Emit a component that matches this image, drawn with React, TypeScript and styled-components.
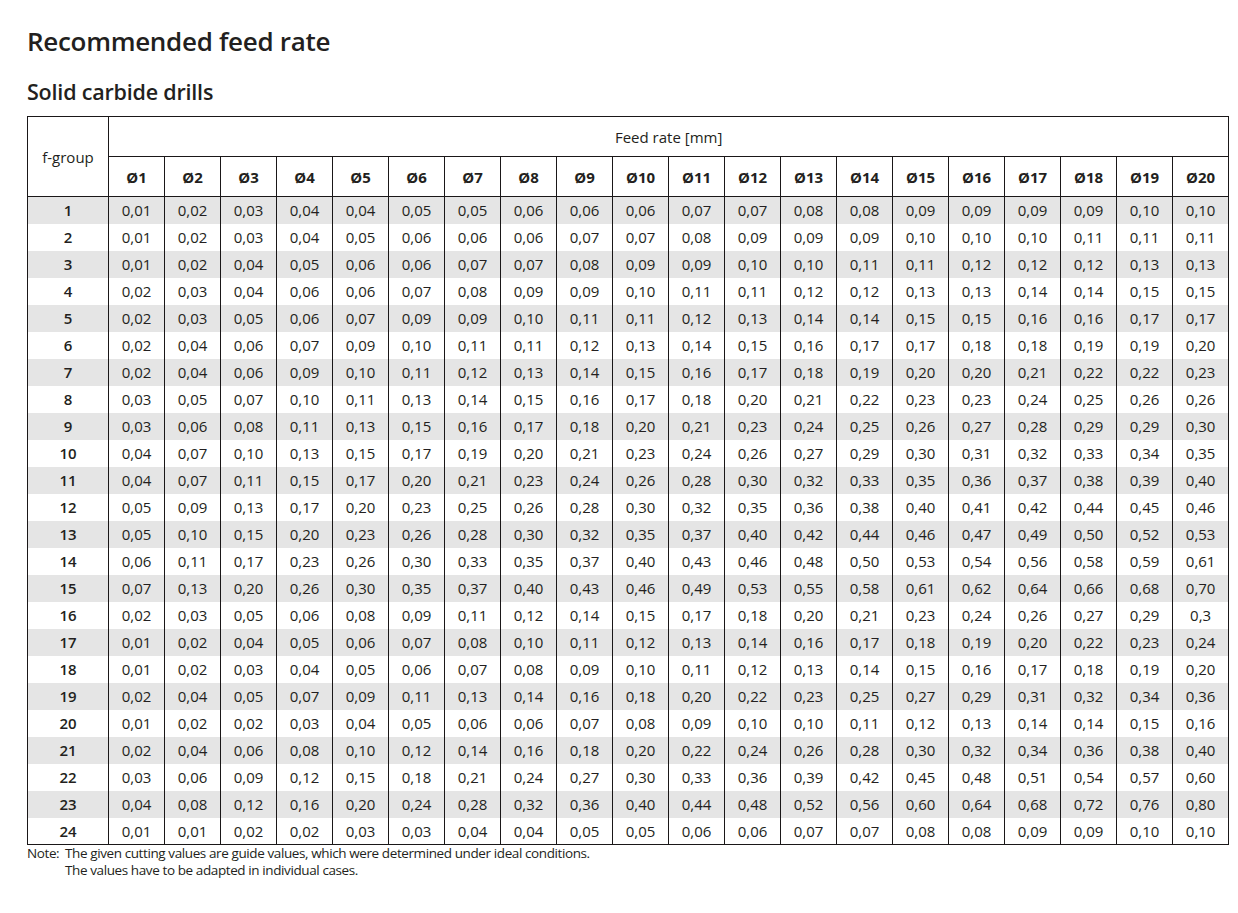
import React from "react";
import styled, { createGlobalStyle } from "styled-components";

const GlobalStyle = createGlobalStyle`
	body {
		margin: 0;
		background: #fff;
		color: #231f20;
		font-family: "Open Sans", "Liberation Sans", sans-serif;
	}
`;

const ROWS = [
	"0,01 0,02 0,03 0,04 0,04 0,05 0,05 0,06 0,06 0,06 0,07 0,07 0,08 0,08 0,09 0,09 0,09 0,09 0,10 0,10",
	"0,01 0,02 0,03 0,04 0,05 0,06 0,06 0,06 0,07 0,07 0,08 0,09 0,09 0,09 0,10 0,10 0,10 0,11 0,11 0,11",
	"0,01 0,02 0,04 0,05 0,06 0,06 0,07 0,07 0,08 0,09 0,09 0,10 0,10 0,11 0,11 0,12 0,12 0,12 0,13 0,13",
	"0,02 0,03 0,04 0,06 0,06 0,07 0,08 0,09 0,09 0,10 0,11 0,11 0,12 0,12 0,13 0,13 0,14 0,14 0,15 0,15",
	"0,02 0,03 0,05 0,06 0,07 0,09 0,09 0,10 0,11 0,11 0,12 0,13 0,14 0,14 0,15 0,15 0,16 0,16 0,17 0,17",
	"0,02 0,04 0,06 0,07 0,09 0,10 0,11 0,11 0,12 0,13 0,14 0,15 0,16 0,17 0,17 0,18 0,18 0,19 0,19 0,20",
	"0,02 0,04 0,06 0,09 0,10 0,11 0,12 0,13 0,14 0,15 0,16 0,17 0,18 0,19 0,20 0,20 0,21 0,22 0,22 0,23",
	"0,03 0,05 0,07 0,10 0,11 0,13 0,14 0,15 0,16 0,17 0,18 0,20 0,21 0,22 0,23 0,23 0,24 0,25 0,26 0,26",
	"0,03 0,06 0,08 0,11 0,13 0,15 0,16 0,17 0,18 0,20 0,21 0,23 0,24 0,25 0,26 0,27 0,28 0,29 0,29 0,30",
	"0,04 0,07 0,10 0,13 0,15 0,17 0,19 0,20 0,21 0,23 0,24 0,26 0,27 0,29 0,30 0,31 0,32 0,33 0,34 0,35",
	"0,04 0,07 0,11 0,15 0,17 0,20 0,21 0,23 0,24 0,26 0,28 0,30 0,32 0,33 0,35 0,36 0,37 0,38 0,39 0,40",
	"0,05 0,09 0,13 0,17 0,20 0,23 0,25 0,26 0,28 0,30 0,32 0,35 0,36 0,38 0,40 0,41 0,42 0,44 0,45 0,46",
	"0,05 0,10 0,15 0,20 0,23 0,26 0,28 0,30 0,32 0,35 0,37 0,40 0,42 0,44 0,46 0,47 0,49 0,50 0,52 0,53",
	"0,06 0,11 0,17 0,23 0,26 0,30 0,33 0,35 0,37 0,40 0,43 0,46 0,48 0,50 0,53 0,54 0,56 0,58 0,59 0,61",
	"0,07 0,13 0,20 0,26 0,30 0,35 0,37 0,40 0,43 0,46 0,49 0,53 0,55 0,58 0,61 0,62 0,64 0,66 0,68 0,70",
	"0,02 0,03 0,05 0,06 0,08 0,09 0,11 0,12 0,14 0,15 0,17 0,18 0,20 0,21 0,23 0,24 0,26 0,27 0,29 0,3",
	"0,01 0,02 0,04 0,05 0,06 0,07 0,08 0,10 0,11 0,12 0,13 0,14 0,16 0,17 0,18 0,19 0,20 0,22 0,23 0,24",
	"0,01 0,02 0,03 0,04 0,05 0,06 0,07 0,08 0,09 0,10 0,11 0,12 0,13 0,14 0,15 0,16 0,17 0,18 0,19 0,20",
	"0,02 0,04 0,05 0,07 0,09 0,11 0,13 0,14 0,16 0,18 0,20 0,22 0,23 0,25 0,27 0,29 0,31 0,32 0,34 0,36",
	"0,01 0,02 0,02 0,03 0,04 0,05 0,06 0,06 0,07 0,08 0,09 0,10 0,10 0,11 0,12 0,13 0,14 0,14 0,15 0,16",
	"0,02 0,04 0,06 0,08 0,10 0,12 0,14 0,16 0,18 0,20 0,22 0,24 0,26 0,28 0,30 0,32 0,34 0,36 0,38 0,40",
	"0,03 0,06 0,09 0,12 0,15 0,18 0,21 0,24 0,27 0,30 0,33 0,36 0,39 0,42 0,45 0,48 0,51 0,54 0,57 0,60",
	"0,04 0,08 0,12 0,16 0,20 0,24 0,28 0,32 0,36 0,40 0,44 0,48 0,52 0,56 0,60 0,64 0,68 0,72 0,76 0,80",
	"0,01 0,01 0,02 0,02 0,03 0,03 0,04 0,04 0,05 0,05 0,06 0,06 0,07 0,07 0,08 0,08 0,09 0,09 0,10 0,10",
].map((row) => row.split(" "));

const DIAMETERS = Array.from({ length: 20 }, (_, i) => i + 1);

const LINE = "#1a1718";

const Page = styled.div`
	padding: 26px 0 0 27px;
`;

const Title = styled.h1`
	margin: 0;
	font-size: 26px;
	line-height: 31px;
	font-weight: 600;
	letter-spacing: -0.3px;
`;

const Subtitle = styled.h2`
	margin: 22px 0 0;
	font-size: 21.5px;
	line-height: 26px;
	font-weight: 600;
	letter-spacing: -0.2px;
`;

const Table = styled.table`
	margin-top: 11px;
	width: 1202px;
	table-layout: fixed;
	border-collapse: collapse;
	border: 1px solid ${LINE};
	font-size: 15px;
`;

const HeadCell = styled.th<{ $bold?: boolean }>`
	height: 39px;
	padding: 0;
	border: 1px solid ${LINE};
	font-weight: ${(p) => (p.$bold ? 700 : 400)};
	font-size: 15px;
	text-align: center;
	vertical-align: middle;
`;

const Row = styled.tr<{ $shaded: boolean }>`
	height: 27px;
	background: ${(p) => (p.$shaded ? "#e5e5e5" : "#fff")};
`;

const GroupCell = styled.td`
	padding: 0;
	border-left: 1px solid ${LINE};
	border-right: 1px solid ${LINE};
	font-weight: 600;
	text-align: center;
`;

const ValueCell = styled.td`
	padding: 0;
	border-left: 1px solid ${LINE};
	border-right: 1px solid ${LINE};
	text-align: center;
`;

const Note = styled.div`
	display: flex;
	font-size: 13.5px;
	line-height: 17px;
	letter-spacing: -0.4px;
`;

const NoteLabel = styled.span`
	width: 38px;
	flex: none;
`;

const App = () => (
	<>
		<GlobalStyle />
		<Page>
			<Title>Recommended feed rate</Title>
			<Subtitle>Solid carbide drills</Subtitle>
			<Table>
				<colgroup>
					<col style={{ width: 81 }} />
					{DIAMETERS.map((d) => (
						<col key={d} style={{ width: 56 }} />
					))}
				</colgroup>
				<thead>
					<tr>
						<HeadCell rowSpan={2}>f-group</HeadCell>
						<HeadCell colSpan={20}>Feed rate [mm]</HeadCell>
					</tr>
					<tr>
						{DIAMETERS.map((d) => (
							<HeadCell key={d} $bold>
								Ø{d}
							</HeadCell>
						))}
					</tr>
				</thead>
				<tbody>
					{ROWS.map((values, index) => (
						<Row key={index} $shaded={index % 2 === 0}>
							<GroupCell>{index + 1}</GroupCell>
							{values.map((value, i) => (
								<ValueCell key={i}>{value}</ValueCell>
							))}
						</Row>
					))}
				</tbody>
			</Table>
			<Note>
				<NoteLabel>Note:</NoteLabel>
				<div>
					The given cutting values are guide values, which were determined under ideal conditions.
					<br />
					The values have to be adapted in individual cases.
				</div>
			</Note>
		</Page>
	</>
);

export default App;
